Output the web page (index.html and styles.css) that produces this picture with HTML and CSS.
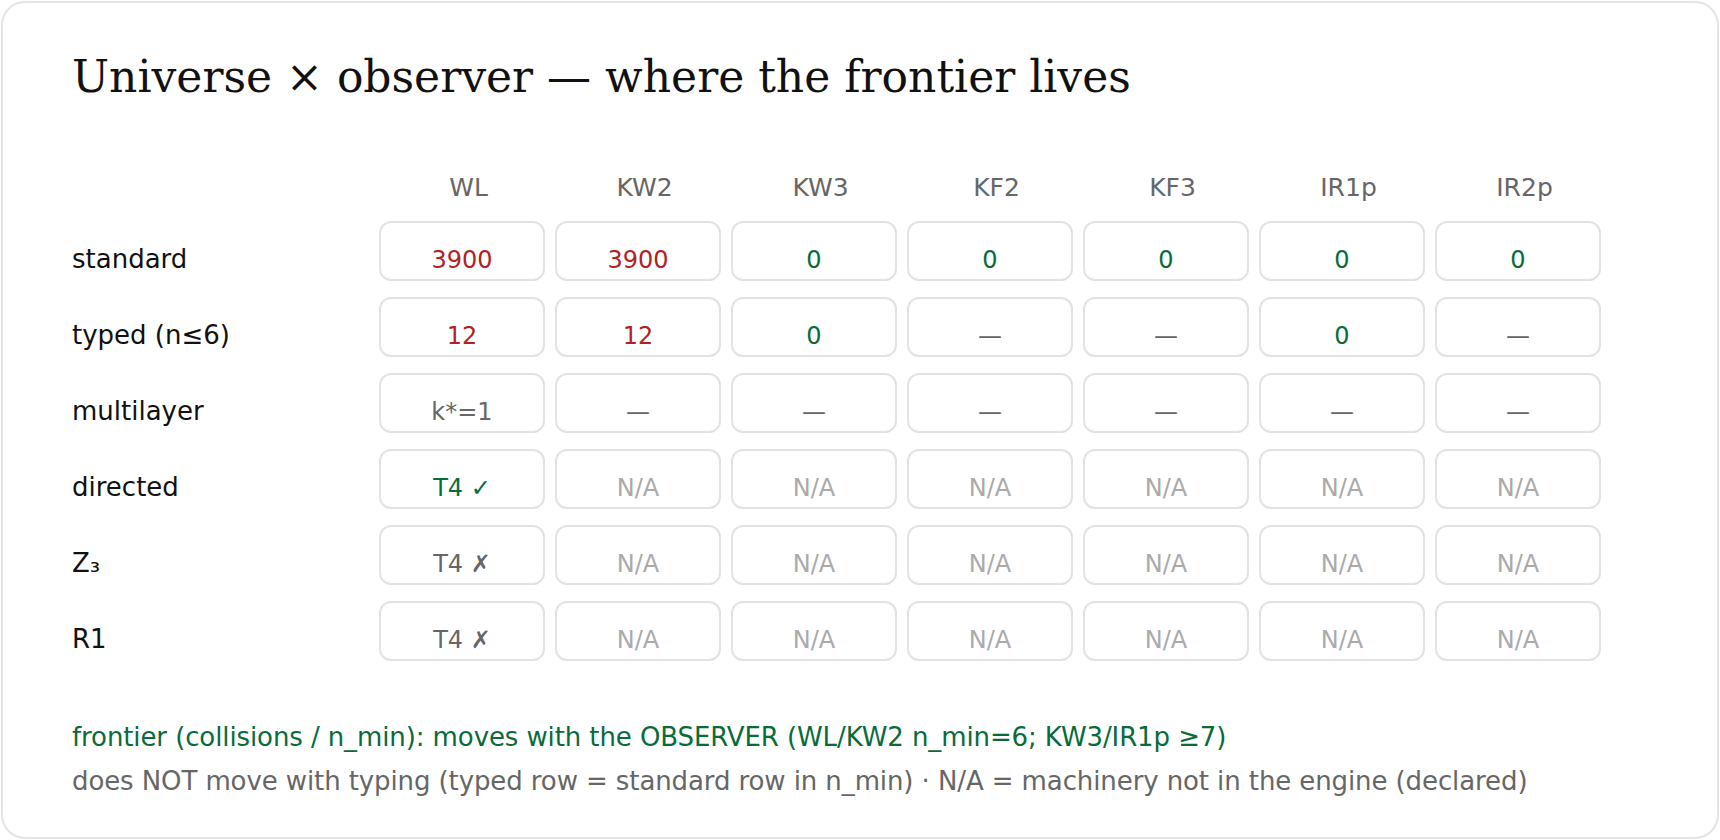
FILE: index.html
```html
<!DOCTYPE html>
<html>
<head>
<meta charset="utf-8">
<link rel="stylesheet" href="styles.css">
</head>
<body>
<div class="card">
  <h1 class="title">Universe × observer — where the frontier lives</h1>
  <div class="grid">
    <div class="corner"></div>
    <div class="colhead">WL</div>
    <div class="colhead">KW2</div>
    <div class="colhead">KW3</div>
    <div class="colhead">KF2</div>
    <div class="colhead">KF3</div>
    <div class="colhead">IR1p</div>
    <div class="colhead">IR2p</div>

    <div class="rowlabel">standard</div>
    <div class="cell bad">3900</div>
    <div class="cell bad">3900</div>
    <div class="cell good">0</div>
    <div class="cell good">0</div>
    <div class="cell good">0</div>
    <div class="cell good">0</div>
    <div class="cell good">0</div>

    <div class="rowlabel">typed (n≤6)</div>
    <div class="cell bad">12</div>
    <div class="cell bad">12</div>
    <div class="cell good">0</div>
    <div class="cell muted">—</div>
    <div class="cell muted">—</div>
    <div class="cell good">0</div>
    <div class="cell muted">—</div>

    <div class="rowlabel">multilayer</div>
    <div class="cell muted">k*=1</div>
    <div class="cell muted">—</div>
    <div class="cell muted">—</div>
    <div class="cell muted">—</div>
    <div class="cell muted">—</div>
    <div class="cell muted">—</div>
    <div class="cell muted">—</div>

    <div class="rowlabel">directed</div>
    <div class="cell good">T4 ✓</div>
    <div class="cell na">N/A</div>
    <div class="cell na">N/A</div>
    <div class="cell na">N/A</div>
    <div class="cell na">N/A</div>
    <div class="cell na">N/A</div>
    <div class="cell na">N/A</div>

    <div class="rowlabel">Z₃</div>
    <div class="cell muted">T4 ✗</div>
    <div class="cell na">N/A</div>
    <div class="cell na">N/A</div>
    <div class="cell na">N/A</div>
    <div class="cell na">N/A</div>
    <div class="cell na">N/A</div>
    <div class="cell na">N/A</div>

    <div class="rowlabel">R1</div>
    <div class="cell muted">T4 ✗</div>
    <div class="cell na">N/A</div>
    <div class="cell na">N/A</div>
    <div class="cell na">N/A</div>
    <div class="cell na">N/A</div>
    <div class="cell na">N/A</div>
    <div class="cell na">N/A</div>
  </div>
  <div class="notes">
    <p class="note note-green">frontier (collisions / n_min): moves with the OBSERVER (WL/KW2 n_min=6; KW3/IR1p ≥7)</p>
    <p class="note note-gray">does NOT move with typing (typed row = standard row in n_min) · N/A = machinery not in the engine (declared)</p>
  </div>
</div>
</body>
</html>
```

FILE: styles.css
```css
* { box-sizing: border-box; }
html, body {
  margin: 0;
  padding: 0;
  background: #ffffff;
}
body {
  width: 1720px;
  height: 840px;
  padding: 1px;
  font-family: "DejaVu Sans", sans-serif;
}
.card {
  width: 1718px;
  height: 838px;
  border: 2px solid #e4e4e4;
  border-radius: 24px;
  background: #fff;
  padding: 48px 0 0 69px;
}
.title {
  margin: 0;
  font-family: "DejaVu Serif", serif;
  font-weight: normal;
  font-size: 44px;
  line-height: 52px;
  color: #111;
}
.grid {
  margin-top: 73px;
  display: grid;
  grid-template-columns: 297px repeat(7, 166px);
  grid-template-rows: 29px repeat(6, 60px);
  column-gap: 10px;
  row-gap: 16px;
}
.colhead {
  text-align: center;
  font-size: 25px;
  line-height: 23px;
  color: #666;
  padding-left: 13px;
}
.rowlabel {
  font-size: 26px;
  line-height: 28px;
  padding-top: 24px;
  color: #111;
}
.cell {
  border: 2px solid #e2e2e2;
  border-radius: 12px;
  text-align: center;
  font-size: 24px;
  line-height: 28px;
  padding-top: 23px;
}
.bad { color: #b22222; }
.good { color: #0a6b3a; }
.muted { color: #666; }
.na { color: #aaa; }
.notes {
  margin-top: 54px;
}
.note {
  margin: 0;
  font-size: 26px;
  letter-spacing: -0.1px;
  line-height: 44px;
}
.note-green { color: #0a6b3a; }
.note-gray { color: #666; }
```
